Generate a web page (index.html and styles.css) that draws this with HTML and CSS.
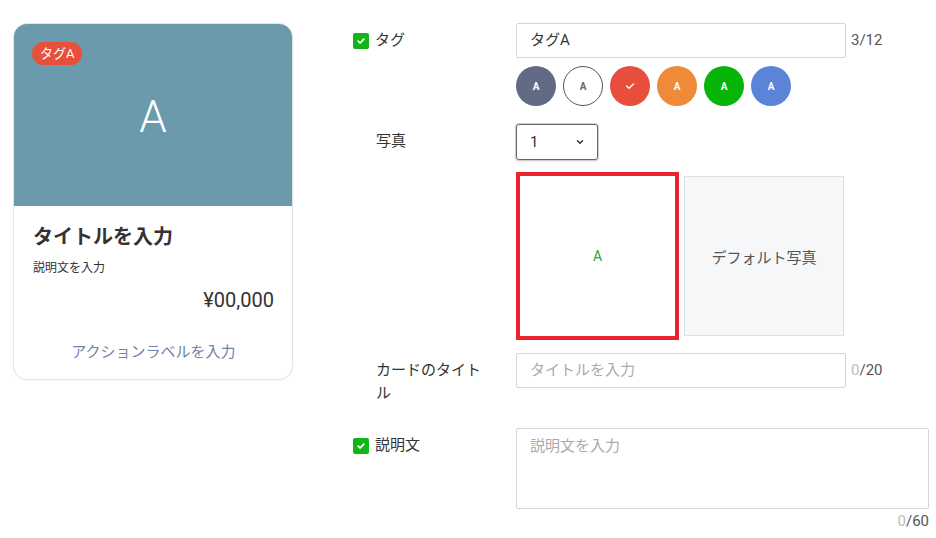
FILE: index.html
```html
<!DOCTYPE html>
<html lang="ja">
<head>
<meta charset="utf-8">
<link rel="stylesheet" href="styles.css">
</head>
<body>
<div class="page">
  <div class="card">
    <div class="card-image">
      <span class="tag-pill">タグA</span>
      <span class="big-a">A</span>
    </div>
    <div class="card-body">
      <div class="card-title">タイトルを入力</div>
      <div class="card-desc">説明文を入力</div>
      <div class="card-price">¥00,000</div>
      <div class="card-action">アクションラベルを入力</div>
    </div>
  </div>

  <div class="form">
    <div class="row row-tag">
      <div class="label"><span class="check"><svg width="10" height="10" viewBox="0 0 10 10"><path d="M2.2 5.2 L4.2 7 L7.8 3.2" fill="none" stroke="#fff" stroke-width="1.8" stroke-linecap="round" stroke-linejoin="round"/></svg></span><span>タグ</span></div>
      <div class="field">
        <div class="with-counter">
          <div class="input">タグA</div>
          <span class="counter">3/12</span>
        </div>
        <div class="swatches">
          <span class="sw sw-slate">A</span>
          <span class="sw sw-white">A</span>
          <span class="sw sw-red"><svg width="12" height="10" viewBox="0 0 12 10"><path d="M2.5 5 L5 7.2 L9.5 3" fill="none" stroke="#fff" stroke-width="1.4" stroke-linecap="round" stroke-linejoin="round"/></svg></span>
          <span class="sw sw-orange">A</span>
          <span class="sw sw-green">A</span>
          <span class="sw sw-blue">A</span>
        </div>
      </div>
    </div>

    <div class="row row-photo">
      <div class="label plain">写真</div>
      <div class="field">
        <div class="select"><span>1</span><svg width="8" height="6" viewBox="0 0 8 6"><path d="M1.5 1.8 L4 4.2 L6.5 1.8" fill="none" stroke="#333" stroke-width="1.5" stroke-linecap="round" stroke-linejoin="round"/></svg></div>
        <div class="photos">
          <div class="photo photo-selected">A</div>
          <div class="photo photo-default">デフォルト写真</div>
        </div>
      </div>
    </div>

    <div class="row row-title">
      <div class="label plain">カードのタイトル</div>
      <div class="field">
        <div class="with-counter">
          <div class="input placeholder">タイトルを入力</div>
          <span class="counter"><span class="zero">0</span>/20</span>
        </div>
      </div>
    </div>

    <div class="row row-desc">
      <div class="label"><span class="check"><svg width="10" height="10" viewBox="0 0 10 10"><path d="M2.2 5.2 L4.2 7 L7.8 3.2" fill="none" stroke="#fff" stroke-width="1.8" stroke-linecap="round" stroke-linejoin="round"/></svg></span><span>説明文</span></div>
      <div class="field">
        <div class="textarea placeholder">説明文を入力</div>
        <div class="counter counter-right"><span class="zero">0</span>/60</div>
      </div>
    </div>
  </div>
</div>
</body>
</html>
```

FILE: styles.css
```css
* { box-sizing: border-box; }
html, body { margin: 0; padding: 0; background: #fff; }
body {
  font-family: Roboto, "Noto Sans CJK JP", sans-serif;
  color: #333;
  width: 936px;
  height: 538px;
  overflow: hidden;
}
.page {
  display: flex;
  align-items: flex-start;
  padding: 23px 0 0 13px;
}

/* Card */
.card {
  width: 280px;
  border: 1px solid #e4e4e4;
  border-radius: 14px;
  overflow: hidden;
  box-shadow: 0 1px 2px rgba(0,0,0,0.05);
  flex: none;
}
.card-image {
  position: relative;
  height: 182px;
  background: #6a9aab;
  display: flex;
  align-items: center;
  justify-content: center;
}
.tag-pill {
  position: absolute;
  top: 18px;
  left: 18px;
  height: 23px;
  padding: 0 8px;
  border-radius: 12px;
  background: #e8503c;
  color: #fff;
  font-size: 13px;
  line-height: 23px;
}
.big-a {
  color: #fff;
  font-size: 44px;
  font-weight: 300;
  line-height: 1;
  margin-top: 4px;
}
.card-body {
  padding: 19px 18px 17px 19px;
}
.card-title {
  font-size: 20px;
  font-weight: 700;
  line-height: 24px;
}
.card-desc {
  font-size: 12px;
  line-height: 18px;
  margin-top: 10px;
}
.card-price {
  font-size: 20px;
  line-height: 24px;
  margin-top: 11px;
  text-align: right;
}
.card-action {
  font-size: 15px;
  line-height: 20px;
  margin-top: 30px;
  text-align: center;
  color: #7282a8;
}

/* Form */
.form {
  margin-left: 60px;
  display: flex;
  flex-direction: column;
}
.row {
  display: flex;
  align-items: flex-start;
}
.label {
  width: 163px;
  flex: none;
  display: flex;
  align-items: flex-start;
  font-size: 15px;
  line-height: 23px;
  padding-top: 6px;
  padding-right: 26px;
}
.label.plain { padding-left: 23px; }
.check {
  width: 16px;
  height: 16px;
  border-radius: 2px;
  background: #12b418;
  display: inline-flex;
  align-items: center;
  justify-content: center;
  margin: 4px 6px 0 0;
  flex: none;
}
.field { display: flex; flex-direction: column; }
.with-counter { display: flex; align-items: flex-start; }
.input {
  width: 330px;
  height: 35px;
  border: 1px solid #d5d5d5;
  border-radius: 2px;
  padding: 0 13px;
  font-size: 15px;
  line-height: 33px;
  color: #333;
}
.placeholder { color: #aaa; }
.counter {
  font-size: 15px;
  line-height: 35px;
  color: #555;
  margin-left: 5px;
}
.zero { color: #bbb; }
.counter-right {
  text-align: right;
  line-height: 24px;
  margin: 0;
}

.swatches {
  display: flex;
  gap: 7px;
  margin-top: 8px;
}
.sw {
  width: 40px;
  height: 40px;
  border-radius: 50%;
  display: flex;
  align-items: center;
  justify-content: center;
  color: #fff;
  font-size: 10px;
  font-weight: 700;
}
.sw-slate { background: #636a85; }
.sw-white { background: #fff; border: 1px solid #555; color: #666; }
.sw-red { background: #e84e3c; }
.sw-orange { background: #ee8a38; }
.sw-green { background: #06b40a; }
.sw-blue { background: #5b83d8; }

.row-photo { margin-top: 18px; }
.select {
  width: 82px;
  height: 36px;
  border: 1px solid #666;
  border-radius: 3px;
  box-shadow: 0 0 0 1px #d0d0d0, 0 1px 2px rgba(0,0,0,0.25);
  display: flex;
  align-items: center;
  justify-content: space-between;
  padding: 0 13px 0 13px;
  font-size: 15px;
}
.photos {
  display: flex;
  align-items: center;
  gap: 5px;
  margin-top: 12px;
}
.photo {
  display: flex;
  align-items: center;
  justify-content: center;
}
.photo-selected {
  width: 163px;
  height: 168px;
  border: 4px solid #e8232b;
  background: #fff;
  color: #2aa52a;
  font-size: 14px;
}
.photo-default {
  width: 160px;
  height: 160px;
  border: 1px solid #e0e0e0;
  background: #f6f7f9;
  color: #555;
  font-size: 15px;
}

.row-title { margin-top: 13px; }
.row-desc { margin-top: 23px; }
.textarea {
  width: 413px;
  height: 81px;
  border: 1px solid #d5d5d5;
  border-radius: 2px;
  padding: 6px 13px;
  font-size: 15px;
  line-height: 23px;
}
```
